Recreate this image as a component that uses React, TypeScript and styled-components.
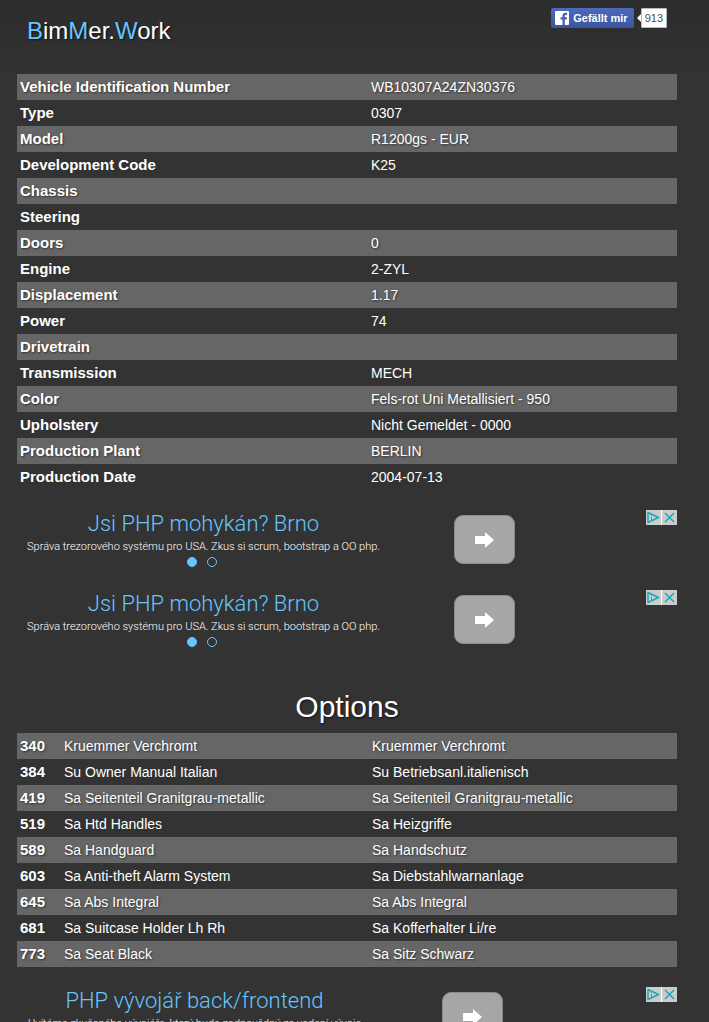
import React from "react";
import styled, { createGlobalStyle } from "styled-components";

const GlobalStyle = createGlobalStyle`
  * { box-sizing: border-box; }
  body {
    margin: 0;
    background: #333 linear-gradient(#2c2c2c, #333) no-repeat 0 0 / 100% 80px;
    color: #fff;
    font-family: "Liberation Sans", Arial, sans-serif;
    font-size: 14px;
    line-height: 20px;
  }
`;

const Page = styled.div`
  min-height: 100vh;
  padding: 0 32px 0 17px;
`;

const Header = styled.header`
  display: flex;
  justify-content: space-between;
  align-items: flex-start;
  height: 74px;
  padding: 8px 10px 0;
`;

const Brand = styled.a`
  margin-top: 8px;
  font-size: 24px;
  line-height: 30px;
  color: #fff;
  text-decoration: none;
  text-shadow: 1px 1px 2px #111;
`;

const Accent = styled.span`
  color: #66c5ff;
`;

const Social = styled.div`
  display: flex;
  align-items: center;
`;

const LikeButton = styled.button`
  display: flex;
  align-items: center;
  gap: 4px;
  height: 20px;
  padding: 0 6px 0 4px;
  border: 0;
  border-radius: 2px;
  background: linear-gradient(#4c69ba, #3b55a0);
  color: #fff;
  font: bold 11px "Liberation Sans", Arial, sans-serif;
  white-space: nowrap;
`;

const LikeCount = styled.span`
  position: relative;
  margin-left: 7px;
  padding: 0 3px;
  height: 20px;
  border: 1px solid #bbb;
  border-radius: 1px;
  background: #fff;
  color: #4b4f56;
  font-size: 11px;
  line-height: 18px;

  &::before {
    content: "";
    position: absolute;
    left: -5px;
    top: 5px;
    border: 4px solid transparent;
    border-left: 0;
    border-right-color: #fff;
  }
`;

const DataTable = styled.table`
  width: 100%;
  table-layout: fixed;
  border-collapse: collapse;
`;

const Row = styled.tr`
  &:nth-child(odd) { background: #666; }
`;

const HeadCell = styled.th`
  padding: 3px;
  height: 26px;
  font-size: 15px;
  text-align: left;
  white-space: nowrap;
  text-shadow: 1px 1px 2px #333;
`;

const Cell = styled.td`
  padding: 3px;
  height: 26px;
  text-shadow: 1px 1px 2px #333;
`;

const Column = styled.col<{ $width?: string }>`
  width: ${(p) => p.$width ?? "auto"};
`;

const AdList = styled.div`
  padding-top: 20px;
`;

const Ad = styled.aside<{ $narrow?: boolean }>`
  position: relative;
  display: flex;
  align-items: flex-start;
  gap: ${(p) => (p.$narrow ? 80 : 74)}px;
  height: 80px;
  padding-left: 10px;
  font-family: Roboto, sans-serif;
`;

const AdText = styled.div<{ $narrow?: boolean }>`
  width: ${(p) => (p.$narrow ? 335 : 353)}px;
  padding-top: 1px;
  text-align: center;
  white-space: nowrap;
`;

const AdTitle = styled.a`
  display: block;
  color: #66c5ff;
  font-size: 22px;
  font-weight: 300;
  line-height: 26px;
  text-decoration: none;
`;

const AdCopy = styled.p`
  margin: 0;
  font-size: 11px;
  font-weight: 300;
  line-height: 20px;
`;

const Dots = styled.div`
  display: flex;
  justify-content: center;
  gap: 10px;
  padding-right: 4px;
`;

const Dot = styled.button<{ $active?: boolean }>`
  width: 10px;
  height: 10px;
  padding: 0;
  border: 1px solid #66c5ff;
  border-radius: 50%;
  background: ${(p) => (p.$active ? "#66c5ff" : "transparent")};
`;

const GoButton = styled.button`
  display: flex;
  align-items: center;
  justify-content: center;
  width: 61px;
  height: 49px;
  margin-top: 5px;
  padding: 0;
  border: 1px solid #8a8a8a;
  border-radius: 9px;
  background: #a6a6a6;
`;

const AdChoices = styled.div`
  position: absolute;
  top: 0;
  right: 0;
  display: flex;
  gap: 1px;
  background: #fff;
`;

const ChoiceButton = styled.button`
  display: block;
  width: 15px;
  height: 15px;
  padding: 0;
  border: 0;
  background: #ccc;
`;

const SectionTitle = styled.h2`
  margin: 0;
  padding: 19px 0 8px;
  font-size: 30px;
  font-weight: 400;
  line-height: 36px;
  text-align: center;
  text-shadow: 1px 1px 2px #111;
`;

const vehicle: [string, string][] = [
  ["Vehicle Identification Number", "WB10307A24ZN30376"],
  ["Type", "0307"],
  ["Model", "R1200gs - EUR"],
  ["Development Code", "K25"],
  ["Chassis", ""],
  ["Steering", ""],
  ["Doors", "0"],
  ["Engine", "2-ZYL"],
  ["Displacement", "1.17"],
  ["Power", "74"],
  ["Drivetrain", ""],
  ["Transmission", "MECH"],
  ["Color", "Fels-rot Uni Metallisiert - 950"],
  ["Upholstery", "Nicht Gemeldet - 0000"],
  ["Production Plant", "BERLIN"],
  ["Production Date", "2004-07-13"],
];

const options: [string, string, string][] = [
  ["340", "Kruemmer Verchromt", "Kruemmer Verchromt"],
  ["384", "Su Owner Manual Italian", "Su Betriebsanl.italienisch"],
  ["419", "Sa Seitenteil Granitgrau-metallic", "Sa Seitenteil Granitgrau-metallic"],
  ["519", "Sa Htd Handles", "Sa Heizgriffe"],
  ["589", "Sa Handguard", "Sa Handschutz"],
  ["603", "Sa Anti-theft Alarm System", "Sa Diebstahlwarnanlage"],
  ["645", "Sa Abs Integral", "Sa Abs Integral"],
  ["681", "Sa Suitcase Holder Lh Rh", "Sa Kofferhalter Li/re"],
  ["773", "Sa Seat Black", "Sa Sitz Schwarz"],
];

interface AdProps {
  title: string;
  copy: string;
  narrow?: boolean;
}

function AdBanner({ title, copy, narrow }: AdProps) {
  return (
    <Ad $narrow={narrow}>
      <AdText $narrow={narrow}>
        <AdTitle href="#">{title}</AdTitle>
        <AdCopy>{copy}</AdCopy>
        <Dots>
          <Dot $active aria-label="First slide" />
          <Dot aria-label="Second slide" />
        </Dots>
      </AdText>
      <GoButton aria-label="Open">
        <svg width="19" height="16" viewBox="0 0 19 16" fill="#fff" aria-hidden="true">
          <path d="M0 4h10V0l9 8-9 8v-4H0z" />
        </svg>
      </GoButton>
      <AdChoices>
        <ChoiceButton aria-label="AdChoices">
          <svg width="15" height="15" viewBox="0 0 15 15" fill="none" stroke="#18a9b8" aria-hidden="true">
            <path d="M2 2.500v10l10.500-5z" strokeWidth="1.500" strokeLinejoin="round" />
            <path d="M5.500 7v3M5.500 5v1" />
          </svg>
        </ChoiceButton>
        <ChoiceButton aria-label="Close">
          <svg width="15" height="15" viewBox="0 0 15 15" stroke="#18a9b8" strokeWidth="1.500" aria-hidden="true">
            <path d="M3 3l9 9M12 3l-9 9" />
          </svg>
        </ChoiceButton>
      </AdChoices>
    </Ad>
  );
}

export default function App() {
  return (
    <>
      <GlobalStyle />
      <Page>
        <Header>
          <Brand href="#">
            <Accent>B</Accent>im<Accent>M</Accent>er.<Accent>W</Accent>ork
          </Brand>
          <Social>
            <LikeButton>
              <svg width="14" height="14" viewBox="0 0 14 14" aria-hidden="true">
                <rect width="14" height="14" rx="1" fill="#fff" />
                <path d="M7.500 14V8.500H5.500V6.300H7.500V4.800C7.500 2.800 8.600 1.800 10.500 1.800H12V4H10.900C10 4 9.800 4.400 9.800 5.100V6.300H12L11.700 8.500H9.800V14z" fill="#4562b0" />
              </svg>
              Gefällt mir
            </LikeButton>
            <LikeCount>913</LikeCount>
          </Social>
        </Header>
        <main>
          <DataTable>
            <colgroup>
              <Column $width="351px" />
              <Column />
            </colgroup>
            <tbody>
              {vehicle.map(([name, value]) => (
                <Row key={name}>
                  <HeadCell scope="row">{name}</HeadCell>
                  <Cell>{value}</Cell>
                </Row>
              ))}
            </tbody>
          </DataTable>
          <AdList>
            <AdBanner title="Jsi PHP mohykán? Brno" copy="Správa trezorového systému pro USA. Zkus si scrum, bootstrap a OO php." />
            <AdBanner title="Jsi PHP mohykán? Brno" copy="Správa trezorového systému pro USA. Zkus si scrum, bootstrap a OO php." />
          </AdList>
          <SectionTitle>Options</SectionTitle>
          <DataTable>
            <colgroup>
              <Column $width="44px" />
              <Column $width="308px" />
              <Column />
            </colgroup>
            <tbody>
              {options.map(([code, english, german]) => (
                <Row key={code}>
                  <HeadCell scope="row">{code}</HeadCell>
                  <Cell>{english}</Cell>
                  <Cell>{german}</Cell>
                </Row>
              ))}
            </tbody>
          </DataTable>
          <AdList>
            <AdBanner narrow title="PHP vývojář back/frontend" copy="Uvítáme zkušeného vývojáře, který bude zodpovědný za vedení vývoje" />
          </AdList>
        </main>
      </Page>
    </>
  );
}
